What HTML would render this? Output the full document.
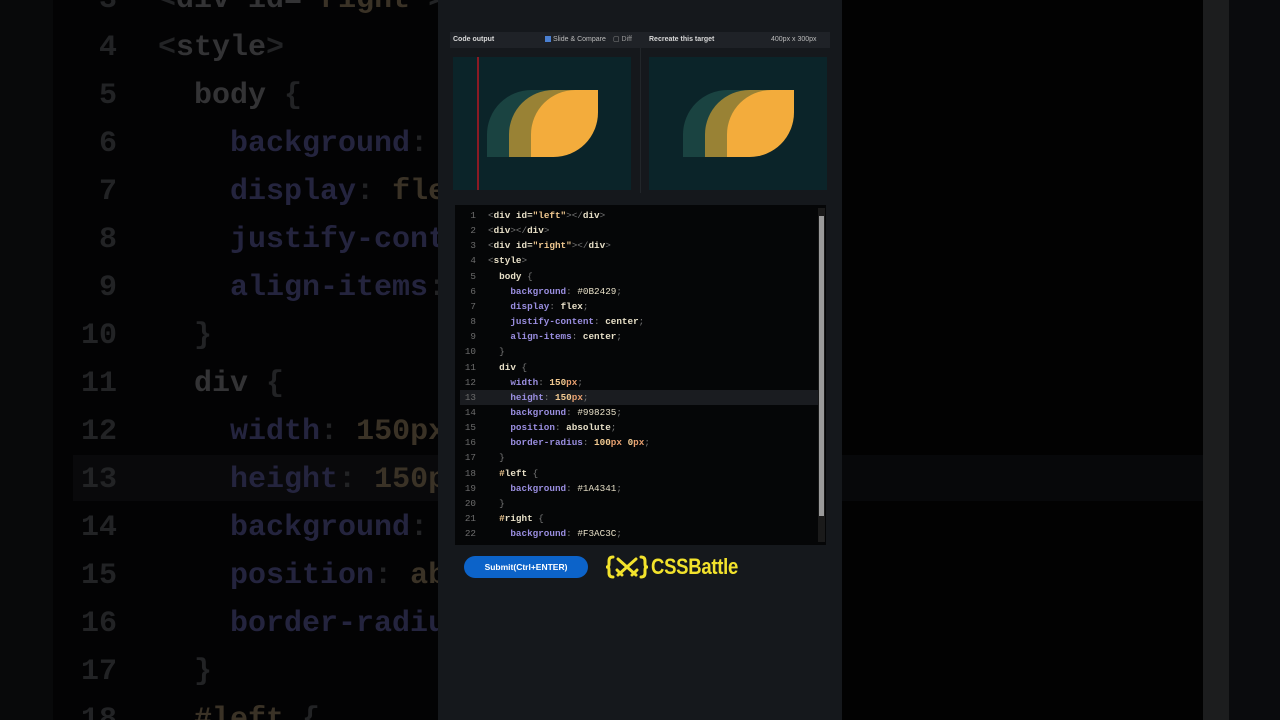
<!DOCTYPE html>
<html><head><meta charset="utf-8"><style>
*{margin:0;padding:0;box-sizing:border-box}
body{width:1280px;height:720px;overflow:hidden;background:#030303;position:relative;font-family:"Liberation Mono",monospace}
.bgl{position:absolute;left:0;top:0;width:438px;height:720px;background:#030304;overflow:hidden}
.bgl .g{position:absolute;left:0;top:0;width:53px;height:720px;background:#08090a}
.bgl .hl{position:absolute;left:73px;top:455px;width:370px;height:46px;background:#09090b}
.bl{position:absolute;left:0;font:bold 30px/48px "Liberation Mono",monospace;white-space:pre;color:#333335}
.bl .n{display:inline-block;width:117px;margin-right:5px;text-align:right;color:#222325}
.bl .a{color:#24243e}.bl .v{color:#3a3226}.bl .p{color:#222325}
.right{position:absolute;left:842px;top:0;width:438px;height:720px;background:#020202}
.right .hl{position:absolute;left:0;top:455px;width:361px;height:46px;background:#07080a}
.right .sb{position:absolute;left:361px;top:0;width:26px;height:720px;background:#1c1d1e}
.right .r{position:absolute;left:387px;top:0;width:52px;height:720px;background:#0a0b0d}
.panel{position:absolute;left:438px;top:0;width:404px;height:720px;background:#15181c}
.hdr{position:absolute;left:12px;top:32px;width:380px;height:16px;background:#1f2227;font:bold 7px/16px "Liberation Sans",sans-serif;color:#d8d8d8}
.hdr span{position:absolute}
.frame{position:absolute;top:57px;width:178px;height:133px;background:#0b2429;overflow:hidden}
.sh{position:absolute;width:67px;height:67px;top:33px;border-radius:44.5px 0}
.code{position:absolute;left:17px;top:205px;width:371px;height:340px;background:#050607;overflow:hidden}
.cl{position:absolute;left:0;font:9.3px/15.15px "Liberation Mono",monospace;white-space:pre;color:#e8e0c8;font-weight:bold}
.cl .n{display:inline-block;width:21px;text-align:right;color:#6c6c6c;font-weight:normal;margin-right:12px}
.k{color:#9a8ee0}.s{color:#f0c890}.pu{color:#777;font-weight:normal}.nb{font-weight:normal}.u{color:#e8a070}
.sbar{position:absolute;left:363px;top:3px;width:7px;height:334px;background:#1a1a1a}
.sbar i{position:absolute;left:1px;top:8px;width:5px;height:300px;background:#9a9a9a}
.btn{position:absolute;left:26px;top:556px;width:124px;height:22px;border-radius:11px;background:#0c63c9;color:#fff;font:bold 8.5px/22px "Liberation Sans",sans-serif;text-align:center}
.logo{position:absolute;left:168px;top:554px;height:26px;color:#f2e22c}
.logo .t{position:absolute;left:45px;top:0;font:bold 22px/26px "Liberation Sans",sans-serif;letter-spacing:-0.3px;transform:scaleX(0.84);transform-origin:left;white-space:nowrap}
</style></head><body>
<div class="bgl"><div class="g"></div><div class="hl"></div>
<div class="bl" style="top:-24px"><span class="n">3</span>  <span class="p">&lt;</span>div id=<span class="v">"right"</span><span class="p">&gt;</span></div>
<div class="bl" style="top:24px"><span class="n">4</span>  <span class="p">&lt;</span>style<span class="p">&gt;</span></div>
<div class="bl" style="top:72px"><span class="n">5</span>    body <span class="p">{</span></div>
<div class="bl" style="top:120px"><span class="n">6</span>      <span class="a">background</span><span class="p">:</span></div>
<div class="bl" style="top:168px"><span class="n">7</span>      <span class="a">display</span><span class="p">:</span> <span class="v">flex</span></div>
<div class="bl" style="top:216px"><span class="n">8</span>      <span class="a">justify-content</span></div>
<div class="bl" style="top:264px"><span class="n">9</span>      <span class="a">align-items</span><span class="p">:</span></div>
<div class="bl" style="top:312px"><span class="n">10</span>    <span class="p">}</span></div>
<div class="bl" style="top:360px"><span class="n">11</span>    div <span class="p">{</span></div>
<div class="bl" style="top:408px"><span class="n">12</span>      <span class="a">width</span><span class="p">:</span> <span class="v">150px</span></div>
<div class="bl" style="top:456px"><span class="n">13</span>      <span class="a">height</span><span class="p">:</span> <span class="v">150px</span></div>
<div class="bl" style="top:504px"><span class="n">14</span>      <span class="a">background</span><span class="p">:</span></div>
<div class="bl" style="top:552px"><span class="n">15</span>      <span class="a">position</span><span class="p">:</span> <span class="v">ab</span></div>
<div class="bl" style="top:600px"><span class="n">16</span>      <span class="a">border-radius</span></div>
<div class="bl" style="top:648px"><span class="n">17</span>    <span class="p">}</span></div>
<div class="bl" style="top:696px"><span class="n">18</span>    <span class="v">#left</span> <span class="p">{</span></div>
</div>
<div class="right"><div class="hl"></div><div class="sb"></div><div class="r"></div></div>
<div class="panel">
<div class="hdr"><span style="left:3px">Code output</span><span style="left:95px;font-weight:normal;color:#bbb"><b style="display:inline-block;width:6px;height:6px;background:#4a7fd0;vertical-align:-1px"></b> Slide &amp; Compare</span><span style="left:163px;font-weight:normal;color:#999">▢ Diff</span><span style="left:199px">Recreate this target</span><span style="left:321px;font-weight:normal;color:#bbb">400px x 300px</span></div>
<div style="position:absolute;left:202px;top:48px;width:1px;height:145px;background:#22262a"></div>
<div class="frame" style="left:15px"><div class="sh" style="left:34px;background:#1a4341"></div><div class="sh" style="left:56px;background:#998235"></div><div class="sh" style="left:78px;background:#f3ac3c"></div><div style="position:absolute;left:24px;top:0;width:2px;height:133px;background:#8a1a24"></div></div>
<div class="frame" style="left:211px"><div class="sh" style="left:34px;background:#1a4341"></div><div class="sh" style="left:56px;background:#998235"></div><div class="sh" style="left:78px;background:#f3ac3c"></div></div>
<div class="code">
<div style="position:absolute;left:5px;top:185px;width:358px;height:15px;background:#1a1c20"></div>
<div class="cl" style="top:3px"><span class="n">1</span><span class="pu">&lt;</span>div id=<span class="s">"left"</span><span class="pu">&gt;&lt;/</span>div<span class="pu">&gt;</span></div>
<div class="cl" style="top:18px"><span class="n">2</span><span class="pu">&lt;</span>div<span class="pu">&gt;&lt;/</span>div<span class="pu">&gt;</span></div>
<div class="cl" style="top:33px"><span class="n">3</span><span class="pu">&lt;</span>div id=<span class="s">"right"</span><span class="pu">&gt;&lt;/</span>div<span class="pu">&gt;</span></div>
<div class="cl" style="top:48px"><span class="n">4</span><span class="pu">&lt;</span>style<span class="pu">&gt;</span></div>
<div class="cl" style="top:64px"><span class="n">5</span>  body <span class="pu">{</span></div>
<div class="cl" style="top:79px"><span class="n">6</span>    <span class="k">background</span><span class="pu">:</span> <span class="nb">#0B2429</span><span class="pu">;</span></div>
<div class="cl" style="top:94px"><span class="n">7</span>    <span class="k">display</span><span class="pu">:</span> flex<span class="pu">;</span></div>
<div class="cl" style="top:109px"><span class="n">8</span>    <span class="k">justify-content</span><span class="pu">:</span> center<span class="pu">;</span></div>
<div class="cl" style="top:124px"><span class="n">9</span>    <span class="k">align-items</span><span class="pu">:</span> center<span class="pu">;</span></div>
<div class="cl" style="top:139px"><span class="n">10</span>  <span class="pu">}</span></div>
<div class="cl" style="top:155px"><span class="n">11</span>  div <span class="pu">{</span></div>
<div class="cl" style="top:170px"><span class="n">12</span>    <span class="k">width</span><span class="pu">:</span> <span class="s">150</span><span class="u">px</span><span class="pu">;</span></div>
<div class="cl" style="top:185px"><span class="n">13</span>    <span class="k">height</span><span class="pu">:</span> <span class="s">150</span><span class="u">px</span><span class="pu">;</span></div>
<div class="cl" style="top:200px"><span class="n">14</span>    <span class="k">background</span><span class="pu">:</span> <span class="nb">#998235</span><span class="pu">;</span></div>
<div class="cl" style="top:215px"><span class="n">15</span>    <span class="k">position</span><span class="pu">:</span> absolute<span class="pu">;</span></div>
<div class="cl" style="top:230px"><span class="n">16</span>    <span class="k">border-radius</span><span class="pu">:</span> <span class="s">100</span><span class="u">px</span> <span class="s">0</span><span class="u">px</span><span class="pu">;</span></div>
<div class="cl" style="top:245px"><span class="n">17</span>  <span class="pu">}</span></div>
<div class="cl" style="top:261px"><span class="n">18</span>  <span class="s">#</span>left <span class="pu">{</span></div>
<div class="cl" style="top:276px"><span class="n">19</span>    <span class="k">background</span><span class="pu">:</span> <span class="nb">#1A4341</span><span class="pu">;</span></div>
<div class="cl" style="top:291px"><span class="n">20</span>  <span class="pu">}</span></div>
<div class="cl" style="top:306px"><span class="n">21</span>  <span class="s">#</span>right <span class="pu">{</span></div>
<div class="cl" style="top:321px"><span class="n">22</span>    <span class="k">background</span><span class="pu">:</span> <span class="nb">#F3AC3C</span><span class="pu">;</span></div>
<div class="sbar"><i></i></div>
</div>
<div class="btn">Submit(Ctrl+ENTER)</div>
<div class="logo">
<svg width="42" height="26" viewBox="0 0 42 26" style="position:absolute;left:0;top:0">
<g fill="none" stroke="#f2e22c" stroke-width="3" stroke-linecap="round" stroke-linejoin="round">
<path d="M7 3 Q3 3 3 7 L3 10 Q3 13 1 13 Q3 13 3 16 L3 19 Q3 23 7 23"/>
<path d="M35 3 Q39 3 39 7 L39 10 Q39 13 41 13 Q39 13 39 16 L39 19 Q39 23 35 23"/>
<path d="M12 5 L30 21 M30 5 L12 21 M11 16 L16 21 M31 16 L26 21"/>
</g></svg>
<span class="t">CSSBattle</span></div>
</div>
</body></html>
